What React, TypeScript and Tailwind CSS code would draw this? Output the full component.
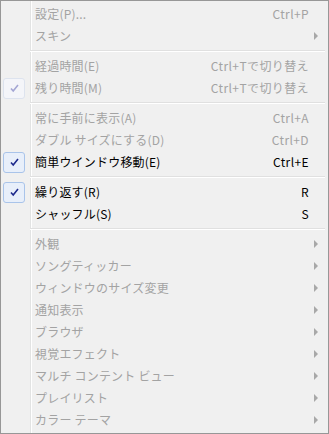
import React from "react";

type Item =
  | { sep: true }
  | {
      sep?: false;
      label: string;
      shortcut?: string;
      arrow?: boolean;
      disabled?: boolean;
      checked?: boolean;
    };

const items: Item[] = [
  { label: "設定(P)...", shortcut: "Ctrl+P", disabled: true },
  { label: "スキン", arrow: true, disabled: true },
  { sep: true },
  { label: "経過時間(E)", shortcut: "Ctrl+Tで切り替え", disabled: true },
  { label: "残り時間(M)", shortcut: "Ctrl+Tで切り替え", disabled: true, checked: true },
  { sep: true },
  { label: "常に手前に表示(A)", shortcut: "Ctrl+A", disabled: true },
  { label: "ダブル サイズにする(D)", shortcut: "Ctrl+D", disabled: true },
  { label: "簡単ウインドウ移動(E)", shortcut: "Ctrl+E", checked: true },
  { sep: true },
  { label: "繰り返す(R)", shortcut: "R", checked: true },
  { label: "シャッフル(S)", shortcut: "S" },
  { sep: true },
  { label: "外観", arrow: true, disabled: true },
  { label: "ソングティッカー", arrow: true, disabled: true },
  { label: "ウィンドウのサイズ変更", arrow: true, disabled: true },
  { label: "通知表示", arrow: true, disabled: true },
  { label: "ブラウザ", arrow: true, disabled: true },
  { label: "視覚エフェクト", arrow: true, disabled: true },
  { label: "マルチ コンテント ビュー", arrow: true, disabled: true },
  { label: "プレイリスト", arrow: true, disabled: true },
  { label: "カラー テーマ", arrow: true, disabled: true },
];

function Check({ disabled }: { disabled?: boolean }) {
  return (
    <div
      className={
        "w-[22px] h-[21px] rounded-[3px] border flex items-center justify-center " +
        (disabled
          ? "border-[#dde3ee] bg-[#f4f5f9]"
          : "border-[#a9c4ea] bg-[#e8effa]")
      }
    >
      <svg width="9" height="9" viewBox="0 0 9 9">
        <path
          d="M1 4.5 L3.2 7 L8 1"
          fill="none"
          stroke={disabled ? "#a4a6d4" : "#1e2a8c"}
          strokeWidth="1.6"
        />
      </svg>
    </div>
  );
}

export default function App() {
  return (
    <div
      className="w-[329px] h-[434px] bg-[#f0f0f0] border border-[#979797] relative overflow-hidden"
      style={{ fontFamily: '"Noto Sans CJK JP", "Noto Sans", sans-serif' }}
    >
      <div className="absolute left-[29px] top-0 bottom-0 w-[1px] bg-[#e2e3e3]" />
      <div className="absolute left-[30px] top-0 bottom-0 w-[1px] bg-[#ffffff]" />
      <div className="relative flex flex-col p-[2px]">
        {items.map((it, i) =>
          it.sep ? (
            <div key={i} className="h-[8px] flex flex-col justify-center pl-[27px] pr-[1px]">
              <div className="h-[1px] bg-[#e0e0e0]" />
              <div className="h-[1px] bg-[#ffffff]" />
            </div>
          ) : (
            <div
              key={i}
              className={
                "h-[22px] flex items-center text-[12px] leading-none " +
                (it.disabled ? "text-[#a3a3a3]" : "text-[#000000]")
              }
            >
              <div className="w-[26px] flex items-center justify-start">
                {it.checked && <Check disabled={it.disabled} />}
              </div>
              <div className="pl-[6px] flex-1 whitespace-nowrap tracking-[0.2px]">{it.label}</div>
              {it.shortcut && (
                <div className="pr-[17px] whitespace-nowrap tracking-[0.4px]">{it.shortcut}</div>
              )}
              {it.arrow && (
                <div className="pr-[8px] flex items-center">
                  <svg width="4" height="8" viewBox="0 0 4 8">
                    <path d="M0 0 L4 4 L0 8 Z" fill="#a8a8a8" />
                  </svg>
                </div>
              )}
            </div>
          )
        )}
      </div>
    </div>
  );
}
